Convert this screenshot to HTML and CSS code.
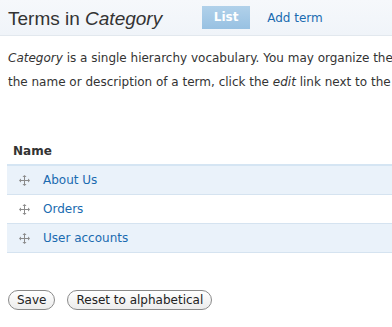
FILE: index.html
```html
<!DOCTYPE html>
<html lang="en">
<head>
  <meta charset="UTF-8">
  <title>Terms in Category</title>
  <link rel="stylesheet" href="styles.css">
</head>
<body>
  <div class="page">
    <div class="page-header">
      <h1>Terms in <em>Category</em></h1>
      <ul class="tabs">
        <li class="active"><a href="#">List</a></li>
        <li><a href="#">Add term</a></li>
      </ul>
    </div>

    <div class="content">
      <p class="help">
        <em>Category</em> is a single hierarchy vocabulary. You may organize the terms in the <em>Category</em> vocabulary by using the handles on the left side of the table. To change<br>
        the name or description of a term, click the <em>edit</em> link next to the term.
      </p>

      <table class="terms">
        <thead>
          <tr><th>Name</th></tr>
        </thead>
        <tbody>
          <tr class="odd"><td><svg class="handle" viewBox="0 0 11 11"><path d="M5.5 1.5v8M1.5 5.5h8" stroke="#8a8a8a" stroke-width="1"/><path d="M5.5 0l-2 2h4zM5.5 11l-2-2h4zM0 5.5l2-2v4zM11 5.5l-2-2v4z" fill="#8a8a8a"/></svg><a href="#">About Us</a></td></tr>
          <tr class="even"><td><svg class="handle" viewBox="0 0 11 11"><path d="M5.5 1.5v8M1.5 5.5h8" stroke="#8a8a8a" stroke-width="1"/><path d="M5.5 0l-2 2h4zM5.5 11l-2-2h4zM0 5.5l2-2v4zM11 5.5l-2-2v4z" fill="#8a8a8a"/></svg><a href="#">Orders</a></td></tr>
          <tr class="odd"><td><svg class="handle" viewBox="0 0 11 11"><path d="M5.5 1.5v8M1.5 5.5h8" stroke="#8a8a8a" stroke-width="1"/><path d="M5.5 0l-2 2h4zM5.5 11l-2-2h4zM0 5.5l2-2v4zM11 5.5l-2-2v4z" fill="#8a8a8a"/></svg><a href="#">User accounts</a></td></tr>
        </tbody>
      </table>

      <div class="form-actions">
        <button type="submit">Save</button>
        <button type="button">Reset to alphabetical</button>
      </div>
    </div>
  </div>
</body>
</html>
```

FILE: styles.css
```css
*, *::before, *::after {
  margin: 0;
  padding: 0;
  box-sizing: border-box;
}

html, body {
  overflow: hidden;
}

body {
  font-family: "DejaVu Sans", Verdana, sans-serif;
  font-size: 12px;
  color: #333;
  background: #fff;
}

.page {
  width: 1400px;
}

.page-header {
  display: flex;
  align-items: center;
  height: 36px;
  padding: 0 8px;
  background: linear-gradient(#f6f8fb, #f0f4f9);
  border-bottom: 1px solid #e2e8ee;
}

h1 {
  font-family: "Liberation Sans", Arial, sans-serif;
  font-size: 19px;
  font-weight: normal;
  color: #333;
  margin-top: 2px;
  margin-right: 40px;
}

.tabs {
  list-style: none;
  display: flex;
  align-items: center;
  gap: 17px;
}

.tabs a {
  display: block;
  color: #1a6bb0;
  text-decoration: none;
}

.tabs .active a {
  width: 48px;
  height: 23px;
  line-height: 23px;
  text-align: center;
  font-weight: bold;
  color: #fff;
  background: linear-gradient(#b1d1ea, #98c1e2);
}

.content {
  padding: 0 8px;
}

.help {
  margin-top: 10px;
  line-height: 24px;
  white-space: nowrap;
}

.terms {
  margin-top: 46px;
  margin-left: -1px;
  width: 100%;
  border-collapse: collapse;
}

.terms th {
  text-align: left;
  font-weight: bold;
  padding: 4px 6px 6px;
  border-bottom: 2px solid #d5e5f3;
}

.terms td {
  height: 29px;
  padding: 0 12px;
  border-bottom: 1px solid #d5e3f0;
}

.terms .odd {
  background: #eaf2fa;
}

.terms td a {
  color: #1a6bb0;
  text-decoration: none;
}

.handle {
  display: inline-block;
  vertical-align: middle;
  width: 11px;
  height: 11px;
  margin-right: 13px;
}

.form-actions {
  margin-top: 37px;
  display: flex;
  gap: 12px;
}

.form-actions button {
  font-family: "DejaVu Sans", Verdana, sans-serif;
  font-size: 12px;
  color: #222;
  height: 20px;
  padding: 0 8px;
  border: 1px solid #8a8a8a;
  border-radius: 10px;
  background: linear-gradient(#fff, #ececec);
}
```
